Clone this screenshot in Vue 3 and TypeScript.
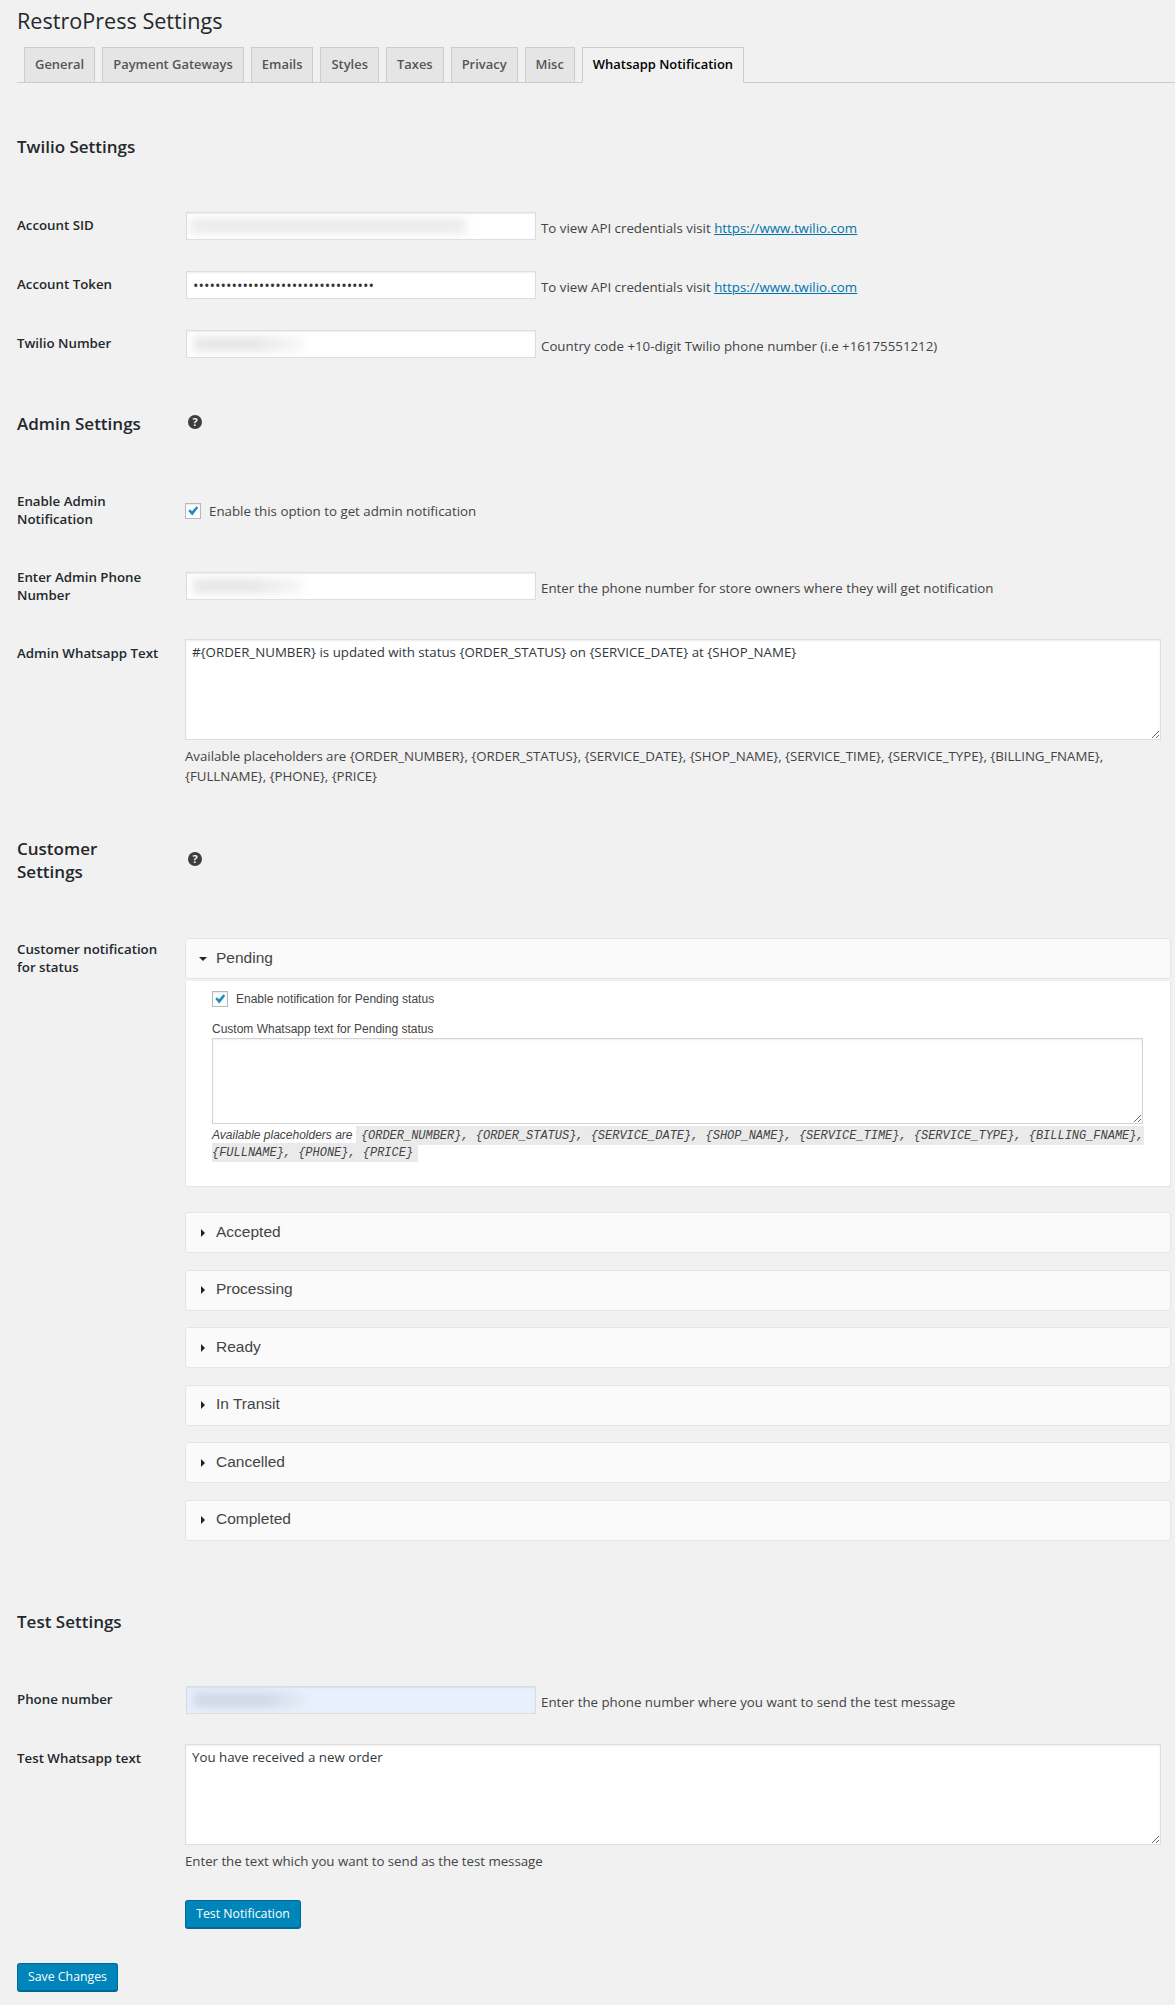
<script setup lang="ts">
const tabs: string[] = ['General', 'Payment Gateways', 'Emails', 'Styles', 'Taxes', 'Privacy', 'Misc']
const closed: string[] = ['Accepted', 'Processing', 'Ready', 'In Transit', 'Cancelled', 'Completed']
const placeholders = '{ORDER_NUMBER}, {ORDER_STATUS}, {SERVICE_DATE}, {SHOP_NAME}, {SERVICE_TIME}, {SERVICE_TYPE}, {BILLING_FNAME}, {FULLNAME}, {PHONE}, {PRICE}'
const adminText = '#{ORDER_NUMBER} is updated with status {ORDER_STATUS} on {SERVICE_DATE} at {SHOP_NAME}'
const testText = 'You have received a new order'
const token = 'abcdefghijklmnopqrstuvwxyz1234567'
</script>

<template>
  <div class="wrap">
    <h1 class="title">RestroPress Settings</h1>
    <nav class="tabs">
      <a v-for="t in tabs" :key="t" class="tab">{{ t }}</a>
      <a class="tab active">Whatsapp Notification</a>
    </nav>

    <h2 class="heading first">Twilio Settings</h2>

    <div class="row r-first">
      <label class="lab">Account SID</label>
      <div class="ctl inline">
        <div class="field"><span class="smudge s-sid"></span></div>
        <span class="desc">To view API credentials visit <a class="link">https://www.twilio.com</a></span>
      </div>
    </div>
    <div class="row r-next">
      <label class="lab">Account Token</label>
      <div class="ctl inline">
        <input class="field pw" type="password" :value="token" readonly />
        <span class="desc">To view API credentials visit <a class="link">https://www.twilio.com</a></span>
      </div>
    </div>
    <div class="row r-next">
      <label class="lab">Twilio Number</label>
      <div class="ctl inline">
        <div class="field"><span class="smudge s-phone"></span></div>
        <span class="desc">Country code +10-digit Twilio phone number (i.e +16175551212)</span>
      </div>
    </div>

    <div class="headrow admin-head">
      <h2 class="heading">Admin Settings</h2>
      <span class="help">?</span>
    </div>

    <div class="row r-check">
      <label class="lab flush">Enable Admin Notification</label>
      <div class="ctl check-line">
        <span class="check"><svg viewBox="0 0 16 16" width="14" height="14"><path d="M2.6 8 L4.6 6 L6.9 8.3 L12 2.6 L14 4.2 L7.2 13.2 Z" fill="#1e8cbe" /></svg></span>
        <span class="desc plain">Enable this option to get admin notification</span>
      </div>
    </div>
    <div class="row r-admin-phone">
      <label class="lab flush">Enter Admin Phone Number</label>
      <div class="ctl inline down">
        <div class="field"><span class="smudge s-phone"></span></div>
        <span class="desc">Enter the phone number for store owners where they will get notification</span>
      </div>
    </div>
    <div class="row r-admin-text">
      <label class="lab lab-text">Admin Whatsapp Text</label>
      <div class="ctl">
        <textarea class="area" :value="adminText" readonly></textarea>
        <p class="note">Available placeholders are {{ placeholders }}</p>
      </div>
    </div>

    <div class="headrow customer-head">
      <h2 class="heading narrow">Customer Settings</h2>
      <span class="help">?</span>
    </div>

    <div class="row r-customer">
      <label class="lab lab-cust">Customer notification for status</label>
      <div class="accordion">
        <div class="acc-head open"><i class="caret-down"></i>Pending</div>
        <div class="acc-body">
          <div class="acc-check">
            <span class="check"><svg viewBox="0 0 16 16" width="14" height="14"><path d="M2.6 8 L4.6 6 L6.9 8.3 L12 2.6 L14 4.2 L7.2 13.2 Z" fill="#1e8cbe" /></svg></span>
            <span>Enable notification for Pending status</span>
          </div>
          <div class="acc-label">Custom Whatsapp text for Pending status</div>
          <textarea class="area acc-area" readonly></textarea>
          <p class="acc-note"><em>Available placeholders are </em><code>{{ placeholders }}</code></p>
        </div>
        <div v-for="c in closed" :key="c" class="acc-head shut"><i class="caret-right"></i>{{ c }}</div>
      </div>
    </div>

    <h2 class="heading test-head">Test Settings</h2>

    <div class="row r-test-phone">
      <label class="lab">Phone number</label>
      <div class="ctl inline">
        <div class="field auto"><span class="smudge s-auto"></span></div>
        <span class="desc">Enter the phone number where you want to send the test message</span>
      </div>
    </div>
    <div class="row r-test-text">
      <label class="lab lab-text">Test Whatsapp text</label>
      <div class="ctl">
        <textarea class="area" :value="testText" readonly></textarea>
        <p class="note">Enter the text which you want to send as the test message</p>
        <button class="btn btn-test" type="button">Test Notification</button>
      </div>
    </div>

    <button class="btn btn-save" type="button">Save Changes</button>
  </div>
</template>

<style>
html, body { background: #f1f1f1; }
</style>

<style scoped>
.wrap {
  box-sizing: border-box;
  width: 1175px;
  height: 2005px;
  padding-left: 17px;
  background: #f1f1f1;
  color: #444;
  font-family: "Open Sans", "Liberation Sans", sans-serif;
  font-size: 13.3px;
  overflow: hidden;
}
.title {
  margin: 0;
  padding-top: 6px;
  height: 47px;
  box-sizing: border-box;
  font-size: 21.6px;
  line-height: 29px;
  font-weight: 400;
  color: #23282d;
}
.tabs {
  display: flex;
  gap: 7px;
  padding-left: 7px;
  height: 35px;
  border-bottom: 1px solid #ccc;
}
.tab {
  box-sizing: border-box;
  height: 36px;
  padding: 0 10px;
  border: 1px solid #ccc;
  background: #e5e5e5;
  color: #555;
  font-size: 12.95px;
  font-weight: 600;
  line-height: 32px;
}
.tab.active {
  background: #f1f1f1;
  border-bottom-color: #f1f1f1;
  color: #000;
}
.heading {
  margin: 0;
  font-size: 17px;
  line-height: 23px;
  font-weight: 600;
  color: #23282d;
}
.first { margin-top: 52px; }
.headrow { display: flex; }
.headrow .heading { width: 171px; }
.heading.narrow { width: 171px; padding-right: 60px; box-sizing: border-box; }
.admin-head { margin-top: 54px; }
.customer-head { margin-top: 51px; }
.help {
  width: 14px;
  height: 14px;
  border-radius: 50%;
  background: #3d3d3d;
  color: #f1f1f1;
  font-size: 11px;
  font-weight: 700;
  line-height: 14px;
  text-align: center;
  margin-top: 3px;
}
.customer-head .help { margin-top: 15px; }
.row {
  display: grid;
  grid-template-columns: 168px 1fr;
}
.r-first { margin-top: 54px; }
.r-next { margin-top: 31px; }
.r-check { margin-top: 57px; }
.r-admin-phone { margin-top: 40px; }
.r-admin-text { margin-top: 35px; }
.r-customer { margin-top: 55px; }
.r-test-phone { margin-top: 53px; }
.r-test-text { margin-top: 30px; }
.lab {
  display: block;
  width: 130px;
  padding-top: 4px;
  font-weight: 600;
  font-size: 13.3px;
  line-height: 18px;
  color: #23282d;
}
.lab.flush { padding-top: 0; }
.lab-text { width: 150px; padding-top: 5px; }
.lab-cust { width: 150px; padding-top: 2px; }
.inline { display: flex; align-items: flex-start; gap: 5px; padding-left: 1px; }
.down { padding-top: 4px; }
.field {
  position: relative;
  box-sizing: border-box;
  display: block;
  width: 350px;
  height: 28px;
  padding: 0 6px;
  border: 1px solid #ddd;
  background: #fff;
  box-shadow: inset 0 1px 2px rgba(0, 0, 0, 0.07);
  overflow: hidden;
  flex: none;
}
.field.auto { background: #e8f0fe; }
.pw { font-size: 14.6px; color: #32373c; outline: none; font-family: "Open Sans", sans-serif; }
.smudge {
  position: absolute;
  top: 5px;
  height: 16px;
  filter: blur(4px);
  border-radius: 3px;
}
.s-sid { left: 3px; width: 276px; background: #ececec; }
.s-phone { left: 6px; width: 110px; background: linear-gradient(90deg, #e8e8e8 55%, #f8f8f8); }
.s-auto { left: 6px; width: 112px; background: linear-gradient(90deg, #d2d9e6 65%, #e6ecf6); }
.desc {
  padding-top: 7px;
  line-height: 18px;
  white-space: nowrap;
}
.link { color: #0073aa; text-decoration: underline; }
.check-line { display: flex; gap: 8px; padding-top: 11px; align-items: flex-start; }
.check {
  box-sizing: border-box;
  width: 16px;
  height: 16px;
  display: inline-flex;
  align-items: center;
  justify-content: center;
  border: 1px solid #b4b9be;
  background: #fff;
  box-shadow: inset 0 1px 2px rgba(0, 0, 0, 0.1);
  flex: none;
}
.desc.plain { padding: 0; line-height: 16px; }
.area {
  box-sizing: border-box;
  display: block;
  width: 976px;
  height: 101px;
  padding: 2px 6px;
  border: 1px solid #ddd;
  background: #fff;
  box-shadow: inset 0 1px 2px rgba(0, 0, 0, 0.07);
  color: #32373c;
  font-family: inherit;
  font-size: 13.3px;
  line-height: 20px;
  outline: none;
}
.note {
  margin: 6px 0 0;
  width: 976px;
  line-height: 20px;
  letter-spacing: -0.04px;
}
.accordion { width: 986px; }
.acc-head {
  box-sizing: border-box;
  display: flex;
  align-items: center;
  height: 41px;
  padding-left: 13px;
  padding-bottom: 2px;
  background: #fafafa;
  border: 1px solid #e5e5e5;
  border-radius: 3px;
  color: #444;
  font-family: "Liberation Sans", Arial, sans-serif;
  font-size: 15.5px;
}
.acc-head.shut { margin-bottom: 16.5px; }
.caret-down {
  width: 0;
  height: 0;
  margin-right: 9px;
  margin-top: 2px;
  border-left: 4px solid transparent;
  border-right: 4px solid transparent;
  border-top: 4px solid #222;
}
.caret-right {
  width: 0;
  height: 0;
  margin-left: 2px;
  margin-right: 11px;
  margin-top: 2px;
  border-top: 4px solid transparent;
  border-bottom: 4px solid transparent;
  border-left: 4px solid #222;
}
.acc-body {
  box-sizing: border-box;
  margin-top: 2px;
  margin-bottom: 25px;
  height: 206px;
  padding: 10px 26px 0;
  background: #fff;
  border: 1px solid #e5e5e5;
  border-top: 0;
  border-radius: 0 0 3px 3px;
  font-family: "Liberation Sans", Arial, sans-serif;
  font-size: 12px;
  color: #444;
}
.acc-check { display: flex; align-items: center; gap: 8px; }
.acc-label { margin-top: 14px; line-height: 17px; }
.acc-area { width: 931px; height: 86px; border-color: #d4d4d4; margin-top: 0; }
.acc-note { margin: 3px 0 0; width: 940px; line-height: 16px; }
.acc-note em { font-style: italic; }
.acc-note code {
  font-family: "Liberation Mono", monospace;
  font-style: italic;
  font-size: 12px;
  letter-spacing: -0.02px;
  background: #eaeaea;
  padding: 3px 5px 2px;
}
.test-head { margin-top: 53px; }
.btn {
  box-sizing: border-box;
  display: block;
  height: 29px;
  padding: 0;
  border: 1px solid #006799;
  border-bottom-width: 2px;
  border-radius: 3px;
  background: #0085ba;
  color: #fff;
  font-family: inherit;
  font-size: 12.3px;
  line-height: 26px;
}
.btn-test { margin-top: 29px; width: 116px; }
.btn-save { margin-top: 34px; width: 101px; }
</style>
